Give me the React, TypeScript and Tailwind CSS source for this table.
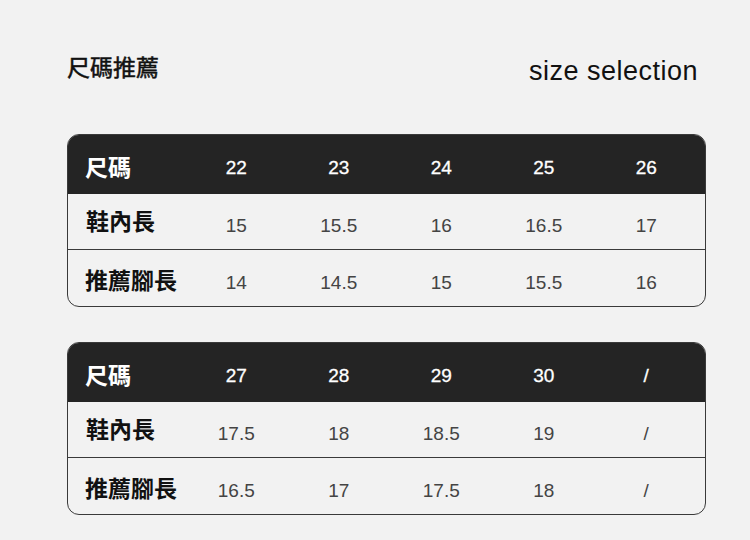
const tables = [
  {
    sizes: ['22', '23', '24', '25', '26'],
    inner: ['15', '15.5', '16', '16.5', '17'],
    foot: ['14', '14.5', '15', '15.5', '16'],
  },
  {
    sizes: ['27', '28', '29', '30', '/'],
    inner: ['17.5', '18', '18.5', '19', '/'],
    foot: ['16.5', '17', '17.5', '18', '/'],
  },
];

const cjk = "font-['Liberation_Sans','Noto_Sans_CJK_TC',sans-serif]";

function SizeTable({ sizes, inner, foot }: { sizes: string[]; inner: string[]; foot: string[] }) {
  return (
    <div className="rounded-[12px] border-[1.5px] border-[#3a3a3a] overflow-hidden">
      <div className="grid grid-cols-[117px_repeat(5,102.5px)] h-[59px] items-center bg-[#242424] text-white pt-[7px]">
        <div className={`pl-[17px] text-[23px] font-bold ${cjk}`}>尺碼</div>
        {sizes.map((s, i) => (
          <div key={i} className="text-center text-[19px] [-webkit-text-stroke:0.3px_white]">
            {s}
          </div>
        ))}
      </div>
      <div className="grid grid-cols-[117px_repeat(5,102.5px)] h-[56px] items-center border-b-[1.5px] border-[#3a3a3a]">
        <div className={`pl-[18px] text-[23px] font-bold text-[#111] pt-[1px] ${cjk}`}>鞋內長</div>
        {inner.map((s, i) => (
          <div key={i} className="text-center text-[19px] text-[#444] pt-[9px]">
            {s}
          </div>
        ))}
      </div>
      <div className="grid grid-cols-[117px_repeat(5,102.5px)] h-[56px] items-center">
        <div className={`pl-[17px] text-[23px] font-bold text-[#111] pt-[7px] ${cjk}`}>推薦腳長</div>
        {foot.map((s, i) => (
          <div key={i} className="text-center text-[19px] text-[#444] pt-[10px]">
            {s}
          </div>
        ))}
      </div>
    </div>
  );
}

export default function App() {
  return (
    <div className="w-[750px] h-[540px] bg-[#f2f2f2] pl-[67px] pr-[44px] pt-[50px] font-['Liberation_Sans',sans-serif]">
      <div className="flex justify-between items-start pr-[8px] h-[84px]">
        <div className={`text-[23px] leading-[32px] mt-[2px] text-[#111] [-webkit-text-stroke:0.5px_#111] ${cjk}`}>尺碼推薦</div>
        <div className="text-[27px] leading-[32px] mt-[5px] tracking-[0.5px] text-[#111]">size selection</div>
      </div>
      <div className="flex flex-col gap-[35px]">
        {tables.map((t, i) => (
          <SizeTable key={i} {...t} />
        ))}
      </div>
    </div>
  );
}
